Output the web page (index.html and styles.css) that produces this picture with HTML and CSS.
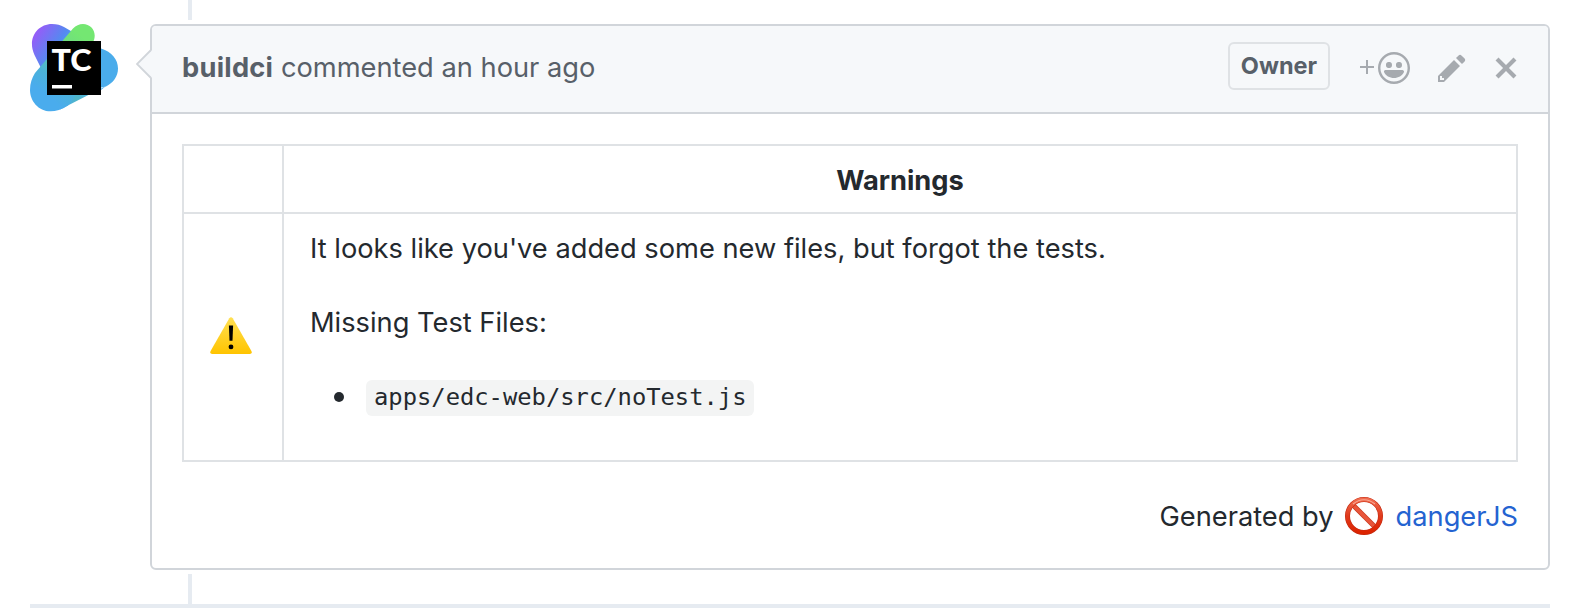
FILE: index.html
```html
<!DOCTYPE html>
<html lang="en">
<head>
<meta charset="utf-8">
<title>buildci comment</title>
<link rel="stylesheet" href="styles.css">
</head>
<body>
<main class="discussion">
  <div class="rail rail-top"></div>
  <div class="thread">
    <svg class="avatar" viewBox="30 24 88 88" role="img" aria-label="TeamCity">
      <defs>
        <linearGradient id="violet" gradientUnits="userSpaceOnUse" x1="32" y1="38" x2="66" y2="60">
          <stop offset="0" stop-color="#965cf8"/><stop offset=".6" stop-color="#5589f0"/><stop offset="1" stop-color="#4aaceb"/>
        </linearGradient>
        <linearGradient id="green" gradientUnits="userSpaceOnUse" x1="84" y1="38" x2="42" y2="92">
          <stop offset="0" stop-color="#74e772"/><stop offset=".2" stop-color="#6fdf7e"/><stop offset=".75" stop-color="#4bb2d8"/><stop offset="1" stop-color="#4aaced"/>
        </linearGradient>
        <linearGradient id="teal" gradientUnits="userSpaceOnUse" x1="60" y1="104" x2="98" y2="84">
          <stop offset="0" stop-color="#4aaced"/><stop offset=".4" stop-color="#4fb5c8"/><stop offset="1" stop-color="#4aaced"/>
        </linearGradient>
      </defs>
      <path fill="url(#violet)" d="M42 70 34.500 55C27 39 37 24 52 24c5 0 8.500 1 12 3l37 21.500c11 3.500 17 11 17 20 0 8-5 14.500-12 18L70 94z"/>
      <path fill="url(#teal)" d="M50 90H101L106 86 60 109.500z"/>
      <path fill="url(#green)" d="M35 73 73 28.500c3-3 6-4.500 10-4.500 6.500 0 11.700 5 11.700 11.500 0 3-.7 5-2.200 7.500L80 90 68 105.400C46 120 30 105 30 90c0-7 2-12 5-17z"/>
      <rect x="47" y="41" width="54" height="54"/>
      <text class="avatar-text" x="51.500" y="70.500" textLength="40" lengthAdjust="spacingAndGlyphs">TC</text>
      <rect x="52" y="85" width="20" height="3.500" fill="#fff"/>
    </svg>
    <article class="comment">
      <svg class="caret" viewBox="0 0 16 30"><path class="caret-fill" d="M16 1 2 15l14 14z"/><path class="caret-line" d="M15 1 1 15l14 14"/></svg>
      <header class="comment-header">
        <h3 class="comment-title"><strong class="author">buildci</strong> <span>commented an hour ago</span></h3>
        <span class="label">Owner</span>
        <span class="reaction">
          <svg class="plus" viewBox="0 0 14 14"><path d="M6 0h2v6h6v2H8v6H6V8H0V6h6z"/></svg>
          <svg class="smiley" viewBox="0 0 16 16"><path fill-rule="evenodd" d="M8 0C3.580 0 0 3.580 0 8s3.580 8 8 8 8-3.580 8-8-3.580-8-8-8zm4.810 12.810a6.720 6.720 0 0 1-2.170 1.450c-.83.36-1.720.53-2.640.53-.92 0-1.810-.17-2.640-.53-.81-.34-1.550-.83-2.170-1.450a6.773 6.773 0 0 1-1.450-2.170A6.590 6.590 0 0 1 1.210 8c0-.92.17-1.810.53-2.640.34-.81.83-1.550 1.450-2.170.62-.62 1.360-1.110 2.170-1.450A6.590 6.590 0 0 1 8 1.210c.92 0 1.810.17 2.640.53.81.34 1.550.83 2.170 1.450.62.62 1.110 1.360 1.450 2.170.36.83.53 1.720.53 2.640 0 .92-.17 1.810-.53 2.640-.34.81-.83 1.550-1.450 2.170zM4 6.800v-.59c0-.66.53-1.190 1.200-1.190h.59c.66 0 1.190.53 1.190 1.190v.59c0 .67-.53 1.200-1.190 1.200H5.200C4.530 8 4 7.470 4 6.800zm5 0v-.59c0-.66.53-1.190 1.200-1.190h.59c.66 0 1.190.53 1.190 1.190v.59c0 .67-.53 1.200-1.190 1.200h-.59C9.530 8 9 7.470 9 6.800zm4 3.200c-.72 1.880-2.910 3-5 3s-4.280-1.130-5-3c-.14-.39.23-1 .66-1h8.590c.41 0 .89.61.75 1z"/></svg>
        </span>
        <svg class="pencil" viewBox="0 0 14 16"><path fill-rule="evenodd" d="M0 12v3h3l8-8-3-3-8 8zm3 2H1v-2h1v1h1v1zm10.300-9.300L12 6 9 3l1.300-1.300a.996.996 0 0 1 1.410 0l1.590 1.590c.39.39.39 1.020 0 1.410z"/></svg>
        <svg class="close" viewBox="0 0 12 16"><path d="M7.480 8l3.750 3.750-1.480 1.480L6 9.480l-3.750 3.750-1.480-1.480L4.520 8 .77 4.250l1.480-1.480L6 6.520l3.750-3.750 1.480 1.480L7.480 8z"/></svg>
      </header>
      <div class="comment-body">
        <table class="warnings">
          <thead><tr><th class="icon-cell"></th><th><span class="heading">Warnings</span></th></tr></thead>
          <tbody><tr>
            <td class="icon-cell">
              <svg class="warning" viewBox="0 0 42 37">
                <defs><linearGradient id="amber" x1="0" y1="0" x2="0" y2="1"><stop offset="0" stop-color="#ffe052"/><stop offset="1" stop-color="#ffc400"/></linearGradient></defs>
                <path fill="url(#amber)" d="M19.300 1.200q1.700-2 3.400 0L41.400 34q1.200 2.700-1.600 2.900H2.200Q-.6 36.700.6 34z"/>
                <path d="M18.900 8.500h4.200l-.6 15.300h-3z"/><circle cx="21" cy="29.900" r="2.400"/>
              </svg>
            </td>
            <td class="message">
              <p class="intro">It looks like you've added some new files, but forgot the tests.</p>
              <p class="missing">Missing Test Files:</p>
              <ul class="files"><li><code>apps/edc-web/src/noTest.js</code></li></ul>
            </td>
          </tr></tbody>
        </table>
        <p class="generated"><span class="by">Generated by</span>
          <svg class="prohibited" viewBox="0 0 38 38">
            <defs><linearGradient id="red" x1="0" y1="0" x2="0" y2="1"><stop offset="0" stop-color="#f06a4d"/><stop offset=".5" stop-color="#e03a1c"/><stop offset="1" stop-color="#dc2300"/></linearGradient></defs>
            <path stroke="#c9391f" stroke-width="5" d="M8 8 30 30"/>
            <path stroke="#e9553a" stroke-width="3.600" d="M8 8 30 30"/>
            <circle cx="19" cy="19" r="16.500" fill="none" stroke="#c32a10" stroke-width="5"/>
            <circle cx="19" cy="19" r="16.500" fill="none" stroke="url(#red)" stroke-width="3.800"/>
            <path fill="none" stroke="#f7a793" stroke-width="1.200" d="M8 7Q19-1.500 30 7"/>
          </svg>
          <a class="link">dangerJS</a></p>
      </div>
    </article>
  </div>
  <div class="rail rail-bottom"></div>
  <div class="divider"></div>
</main>
</body>
</html>
```
FILE: styles.css
```css
* { box-sizing: border-box; }
body { margin: 0; background: #fff; color: #24292e; font: 27.25px/42px Inter, "Liberation Sans", sans-serif; }
svg { display: block; flex: none; }
.discussion { height: 614px; overflow: hidden; padding: 0 20px 0 30px; display: flex; flex-direction: column; }
.rail { width: 4px; margin-left: 158px; background: #e6ebf1; flex: none; }
.rail-top { height: 20px; }
.rail-bottom { height: 30px; margin-top: 4px; }
.divider { height: 4px; background: #e6ebf1; flex: none; }
.thread { display: flex; gap: 32px; margin-top: 4px; align-items: flex-start; }
.avatar { width: 88px; height: 88px; }
.avatar-text { font: 900 30px Lato, sans-serif; fill: #fff; }
.comment { position: relative; flex: 1; height: 546px; border: 2px solid #d1d5da; border-radius: 6px; }
.caret { position: absolute; left: -16px; top: 23px; width: 16px; height: 30px; }
.caret-fill { fill: #f6f8fa; }
.caret-line { fill: none; stroke: #d1d5da; stroke-width: 1.8; }
.comment-header { height: 88px; padding: 0 30px; display: flex; align-items: center; background: #f6f8fa; border-bottom: 2px solid #d1d5da; border-radius: 4px 4px 0 0; color: #586069; }
.comment-title { margin: 0; font-size: 27.25px; font-weight: 400; flex: 1; white-space: nowrap; margin-top: -2px; }
.author { font-weight: 700; letter-spacing: .25px; }
.label { width: 102px; height: 48px; margin: -6px 30px 0 0; border: 2px solid #dfe2e5; border-radius: 6px; font-size: 23.5px; line-height: 44px; font-weight: 700; text-align: center; }
.reaction { display: flex; align-items: center; gap: 4px; margin-right: 28px; }
.comment-header svg { fill: #a6aaaf; }
.plus { width: 14px; height: 14px; margin-top: -4px; }
.smiley { width: 32px; height: 32px; margin-top: -2px; }
.pencil { width: 28px; height: 32px; margin: -2px 28px 0 0; }
.close { width: 24px; height: 32px; margin-top: -2px; }
.comment-body { padding: 30px 30px 32px; }
.warnings { width: 1336px; height: 318px; border-collapse: collapse; table-layout: fixed; }
.warnings th, .warnings td { border: 2px solid #dfe2e5; padding: 12px 26px; }
.warnings th { height: 68px; padding: 14px 26px 10px; font-weight: 700; }
.warnings .icon-cell { width: 100px; }
.warnings td.icon-cell { padding: 10px 26px 14px; }
.warning { width: 42px; height: 37px; }
.warnings .message { vertical-align: top; padding-top: 14px; }
.message p { margin: 0 0 32px; }
.files { margin: -2px 0 0; padding: 0 0 0 56px; list-style: none; }
.files li { height: 42px; display: flex; align-items: flex-end; }
.files li::before { content: ""; width: 10px; height: 10px; border-radius: 50%; background: #24292e; margin: 0 22px 14px -32px; }
.files code { height: 36px; padding: 0 7px 0 8px; border-radius: 6px; background: #f3f4f4; font: 23.8px/35px "DejaVu Sans Mono", monospace; }
.generated { margin: 34px 0 0; display: flex; justify-content: flex-end; align-items: center; }
.prohibited { width: 38px; height: 38px; margin: -2px 13px 0 11px; }
.link { color: #2463d1; }
```
